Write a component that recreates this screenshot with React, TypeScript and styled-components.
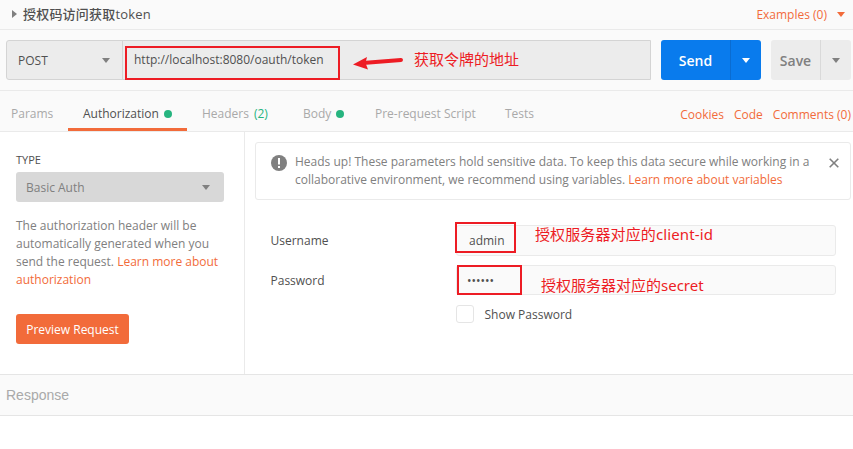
import React from "react";
import styled, { createGlobalStyle } from "styled-components";

const GlobalStyle = createGlobalStyle`
  *, *::before, *::after { box-sizing: border-box; }
  body {
    margin: 0;
    background: #fff;
    font-family: "Open Sans", "Noto Sans CJK SC", sans-serif;
    font-size: 12px;
    line-height: 18px;
    color: #505050;
  }
  button, input { font: inherit; color: inherit; }
`;

const Page = styled.div`
  position: relative;
  width: 853px;
  height: 449px;
  overflow: hidden;
  background: #fff;
`;

const Text = styled.span<{ $tracking?: number }>`
  white-space: nowrap;
  letter-spacing: ${(p) => p.$tracking ?? 0}px;
`;

const Caret = styled.i<{ $color?: string }>`
  flex: none;
  width: 0;
  height: 0;
  border: 4px solid transparent;
  border-top: 5px solid ${(p) => p.$color ?? "#808080"};
  border-bottom: 0;
`;

const TitleBar = styled.header`
  display: flex;
  align-items: center;
  height: 30px;
  padding: 0 8px 0 12px;
  background: #fafafa;
  border-bottom: 1px solid #eaeaea;
`;

const Expander = styled.i`
  width: 0;
  height: 0;
  margin: 0 6px 1px 0;
  border: 4px solid transparent;
  border-left: 5px solid #808080;
  border-right: 0;
`;

const Title = styled.h1`
  flex: 1;
  margin: 0 0 2px;
  font-size: 13px;
  font-weight: 500;
  white-space: nowrap;
`;

const Examples = styled.div`
  display: flex;
  align-items: center;
  gap: 10px;
  color: #f26b3a;
`;

const RequestBar = styled.section`
  display: flex;
  height: 61px;
  padding: 10px 2px 10px 6px;
  background: #fafafa;
  border-bottom: 1px solid #eaeaea;
`;

const UrlGroup = styled.div`
  display: flex;
  width: 645px;
  height: 40px;
  margin-right: 10px;
  background: #ececec;
  border: 1px solid #d4d4d4;
  border-radius: 3px 0 0 3px;
`;

const Method = styled.div`
  display: flex;
  align-items: center;
  justify-content: space-between;
  width: 116px;
  padding: 1px 12px 0 11px;
  border-right: 1px solid #d4d4d4;
  font-weight: 500;
`;

const Url = styled.div`
  padding: 10px 0 0 11px;
`;

const SplitButton = styled.div<{ $primary?: boolean }>`
  display: flex;
  width: ${(p) => (p.$primary ? 100 : 80)}px;
  height: 40px;
  margin-right: ${(p) => (p.$primary ? 10 : 0)}px;
  border-radius: 3px;
  background: ${(p) => (p.$primary ? "#097bed" : "#ececec")};
  color: ${(p) => (p.$primary ? "#fff" : "#808080")};
  font-size: 14px;
  font-weight: 600;
`;

const SplitMain = styled.div`
  display: flex;
  flex: 1;
  align-items: center;
  justify-content: center;
  padding-top: 1px;
`;

const SplitArrow = styled.div<{ $primary?: boolean }>`
  display: flex;
  align-items: center;
  justify-content: center;
  width: 31px;
  border-left: 1px solid ${(p) => (p.$primary ? "#0a6cd1" : "#d9d9d9")};
`;

const TabBar = styled.nav`
  display: flex;
  height: 41px;
  padding-right: 2px;
  background: #fafafa;
  border-bottom: 1px solid #eaeaea;
  color: #a9a9a9;
`;

const Tab = styled.div<{ $width: number; $pad: number; $active?: boolean }>`
  display: flex;
  align-items: center;
  width: ${(p) => p.$width}px;
  height: 40px;
  padding: 9px 0 ${(p) => (p.$active ? 0 : 3)}px ${(p) => p.$pad}px;
  border-bottom: ${(p) => (p.$active ? "3px solid #f26b3a" : "0")};
  color: ${(p) => (p.$active ? "#505050" : "#a9a9a9")};
  white-space: nowrap;
`;

const Dot = styled.i`
  width: 8px;
  height: 8px;
  margin-left: 5px;
  border-radius: 50%;
  background: #26b47f;
`;

const Count = styled.span`
  margin-left: 5px;
  color: #26b47f;
`;

const TabLinks = styled.div`
  display: flex;
  align-items: center;
  gap: 10px;
  margin-left: auto;
  padding-top: 8px;
  color: #f26b3a;
`;

const Body = styled.div`
  display: flex;
  height: 242px;
`;

const Sidebar = styled.aside`
  width: 245px;
  padding: 19px 20px 0 16px;
  border-right: 1px solid #eaeaea;
`;

const TypeLabel = styled.div`
  height: 21px;
  font-size: 11px;
  font-weight: 500;
`;

const TypeSelect = styled.div`
  display: flex;
  align-items: center;
  justify-content: space-between;
  height: 30px;
  padding: 1px 14px 0 10px;
  border-radius: 3px;
  background: #d8d8d8;
  color: #808080;
`;

const Hint = styled.p`
  margin: 15px 0 25px;
  color: #808080;
  white-space: nowrap;
`;

const Link = styled.a`
  color: #f26b3a;
`;

const PreviewButton = styled.button`
  width: 113px;
  height: 30px;
  padding: 1px 0 0;
  border: 0;
  border-radius: 3px;
  background: #f26b3a;
  color: #fff;
  font-weight: 500;
  white-space: nowrap;
`;

const Main = styled.main`
  flex: 1;
  padding: 10px 2px 0 10px;
`;

const Notice = styled.div`
  display: flex;
  height: 58px;
  padding: 10px 11px 0 15px;
  border: 1px solid #eaeaea;
  border-radius: 3px;
  color: #808080;
`;

const NoticeIcon = styled.svg`
  flex: none;
  margin: 2px 8px 0 0;
`;

const NoticeText = styled.p`
  flex: 1;
  margin: 0;
  white-space: nowrap;
`;

const CloseIcon = styled.svg`
  margin-top: 5px;
`;

const Form = styled.div`
  display: grid;
  grid-template-columns: 186px 380px;
  grid-template-rows: 31px 30px 20px;
  row-gap: 9px;
  align-items: center;
  padding: 25px 0 0 15px;
`;

const FieldLabel = styled(Text)`
  padding: 1px 0 0 0.5px;
`;

const Field = styled.input`
  width: 380px;
  height: 100%;
  padding: 0 12px;
  border: 1px solid #eaeaea;
  border-radius: 3px;
  background: #fafafa;
  outline: none;
`;

const SecretField = styled(Field)`
  padding: 1px 10px 0;
`;

const CheckRow = styled.label`
  display: flex;
  grid-column: 2;
  align-items: center;
  gap: 10px;
`;

const CheckBox = styled.span`
  width: 18px;
  height: 18px;
  background: #fff;
  border: 1px solid #e5e5e5;
  border-radius: 3px;
`;

const Response = styled.footer`
  height: 42px;
  padding: 11px 6px;
  background: #fafafa;
  border: solid #e5e5e5;
  border-width: 1px 0;
  color: #a9a9a9;
  font-family: "Liberation Sans", Arial, sans-serif;
  font-size: 14px;
`;

const Highlight = styled.div<{ $x: number; $y: number; $w: number; $h: number }>`
  position: absolute;
  left: ${(p) => p.$x}px;
  top: ${(p) => p.$y}px;
  width: ${(p) => p.$w}px;
  height: ${(p) => p.$h}px;
  border: 2px solid #ed1c24;
  pointer-events: none;
`;

const Note = styled.div<{ $x: number; $y: number }>`
  position: absolute;
  left: ${(p) => p.$x}px;
  top: ${(p) => p.$y}px;
  color: #ed1c24;
  font-family: "Noto Sans", "Noto Sans CJK SC", sans-serif;
  font-size: 15px;
  line-height: 20px;
  white-space: nowrap;
`;

const Arrow = styled.svg`
  position: absolute;
  left: 352px;
  top: 54px;
`;

export default function App() {
  return (
    <Page>
      <GlobalStyle />
      <TitleBar>
        <Expander />
        <Title><Text $tracking={0.2}>授权码访问获取token</Text></Title>
        <Examples>
          <Text>Examples (0)</Text>
          <Caret $color="#f26b3a" />
        </Examples>
      </TitleBar>

      <RequestBar>
        <UrlGroup>
          <Method>
            <Text>POST</Text>
            <Caret />
          </Method>
          <Url>
            <Text>http://localhost:8080/oauth/token</Text>
          </Url>
        </UrlGroup>
        <SplitButton $primary>
          <SplitMain>Send</SplitMain>
          <SplitArrow $primary>
            <Caret $color="#fff" />
          </SplitArrow>
        </SplitButton>
        <SplitButton>
          <SplitMain>Save</SplitMain>
          <SplitArrow>
            <Caret />
          </SplitArrow>
        </SplitButton>
      </RequestBar>

      <TabBar>
        <Tab $width={68} $pad={11}><Text>Params</Text></Tab>
        <Tab $width={119} $pad={15} $active><Text>Authorization</Text><Dot /></Tab>
        <Tab $width={101} $pad={15}><Text>Headers</Text><Count>(2)</Count></Tab>
        <Tab $width={72} $pad={15}><Text>Body</Text><Dot /></Tab>
        <Tab $width={130} $pad={15}><Text>Pre-request Script</Text></Tab>
        <Tab $width={60} $pad={15}><Text>Tests</Text></Tab>
        <TabLinks>
          <Text>Cookies</Text>
          <Text>Code</Text>
          <Text>Comments (0)</Text>
        </TabLinks>
      </TabBar>

      <Body>
        <Sidebar>
          <TypeLabel>TYPE</TypeLabel>
          <TypeSelect>
            <Text>Basic Auth</Text>
            <Caret />
          </TypeSelect>
          <Hint>
            <Text>The authorization header will be</Text><br />
            <Text>automatically generated when you</Text><br />
            <Text>send the request. <Link>Learn more about</Link></Text><br />
            <Link>authorization</Link>
          </Hint>
          <PreviewButton>Preview Request</PreviewButton>
        </Sidebar>
        <Main>
          <Notice>
            <NoticeIcon width="16" height="16" viewBox="0 0 16 16">
              <circle cx="8" cy="8" r="8" fill="#808080" />
              <path d="M7 3h2v6.5H7zM7 11h2v2H7z" fill="#fff" />
            </NoticeIcon>
            <NoticeText>
              <Text>Heads up! These parameters hold sensitive data. To keep this data secure while working in a</Text><br />
              <Text>collaborative environment, we recommend using variables. <Link>Learn more about variables</Link></Text>
            </NoticeText>
            <CloseIcon width="10" height="10" viewBox="0 0 10 10">
              <path d="M.7 .7l8.6 8.6M9.3 .7L.7 9.3" stroke="#808080" strokeWidth="1.6" />
            </CloseIcon>
          </Notice>
          <Form>
            <FieldLabel>Username</FieldLabel>
            <Field defaultValue="admin" />
            <FieldLabel>Password</FieldLabel>
            <SecretField type="password" defaultValue="secret" />
            <CheckRow>
              <CheckBox />
              <FieldLabel>Show Password</FieldLabel>
            </CheckRow>
          </Form>
        </Main>
      </Body>

      <Response>Response</Response>

      <Highlight $x={125} $y={46} $w={215} $h={34} />
      <Highlight $x={455} $y={222} $w={61} $h={31} />
      <Highlight $x={457} $y={265} $w={65} $h={30} />
      <Arrow width="52" height="18" viewBox="0 0 52 18">
        <path d="M49 6L14 8.8" stroke="#ed1c24" strokeWidth="4" strokeLinecap="round" />
        <path d="M1 10.5L15 3L13.5 9L16 15.5Z" fill="#ed1c24" />
      </Arrow>
      <Note $x={414} $y={49}>获取令牌的地址</Note>
      <Note $x={535} $y={224}><Text $tracking={0.12}>授权服务器对应的client-id</Text></Note>
      <Note $x={541} $y={275}>授权服务器对应的secret</Note>
    </Page>
  );
}
